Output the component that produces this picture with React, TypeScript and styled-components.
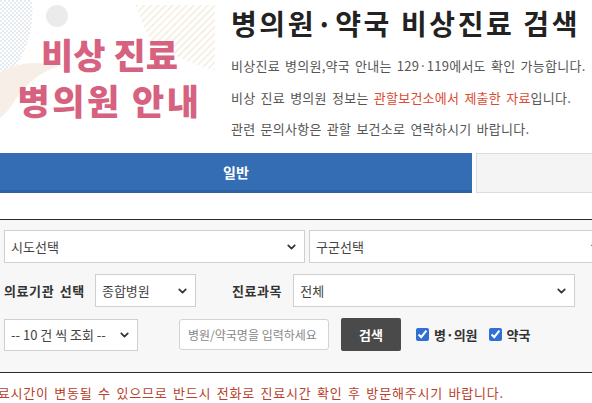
import React from "react"
import styled, { createGlobalStyle } from "styled-components"
import { ChevronDown } from "lucide-react"

const GlobalStyle = createGlobalStyle`
  html, body {
    margin: 0;
    padding: 0;
    background: #fff;
  }
  body {
    font-family: "Noto Sans CJK KR", "Noto Sans", sans-serif;
    color: #333;
  }
`

const Page = styled.div`
  width: 592px;
  height: 403px;
  overflow: hidden;
`

const Header = styled.header`
  display: flex;
  height: 150px;
`

const Banner = styled.div`
  position: relative;
  width: 215px;
  flex: none;
  display: flex;
  flex-direction: column;
  align-items: center;
  justify-content: center;
  padding-top: 4px;
  box-sizing: border-box;
`

const BannerDecor = styled.svg`
  position: absolute;
  inset: 0;
  z-index: 0;
`

const BannerLine = styled.div<{ $ls: number }>`
  position: relative;
  z-index: 1;
  color: #d6627f;
  font-size: 35px;
  font-weight: 900;
  line-height: 46px;
  letter-spacing: ${(p) => p.$ls}px;
  padding-left: 4px;
`

const Intro = styled.div`
  flex: 1;
  padding-left: 16px;
  white-space: nowrap;
`

const Title = styled.h1`
  margin: 8px 0 12px;
  font-size: 28px;
  font-weight: 700;
  line-height: 30px;
  color: #222;
  letter-spacing: 2.6px;
`

const InfoLine = styled.p`
  margin: 0;
  font-size: 13px;
  line-height: 31.5px;
  color: #555;
  letter-spacing: 0.25px;
  word-spacing: 2px;
`

const Red = styled.span`
  color: #dc4a2f;
`

const Tabs = styled.nav`
  display: grid;
  grid-template-columns: 472px 1fr;
  gap: 4px;
  margin-top: 3px;
  height: 40px;
`

const Tab = styled.button<{ $active?: boolean }>`
  border: ${(p) => (p.$active ? "none" : "1px solid #dcdcdc")};
  border-bottom: ${(p) => (p.$active ? "3px solid #2d62a6" : "1px solid #dcdcdc")};
  background: ${(p) => (p.$active ? "#346db3" : "#f4f4f4")};
  color: #fff;
  font-family: inherit;
  font-size: 14px;
  font-weight: 700;
  padding: 0;
  margin-right: ${(p) => (p.$active ? "0" : "-30px")};
`

const Form = styled.form`
  margin-top: 26px;
  border-top: 1px solid #2b2b2b;
  border-bottom: 1px solid #2b2b2b;
  background: #f7f7f7;
  padding: 10px 0 21px 4px;
  display: flex;
  flex-direction: column;
  gap: 11px;
`

const Row = styled.div`
  display: flex;
  align-items: center;
`

const SelectWrap = styled.div<{ $w: number; $ml?: number }>`
  position: relative;
  width: ${(p) => p.$w}px;
  margin-left: ${(p) => p.$ml ?? 0}px;
  flex: none;
`

const Select = styled.select<{ $h?: number }>`
  appearance: none;
  -webkit-appearance: none;
  width: 100%;
  height: ${(p) => p.$h ?? 33}px;
  box-sizing: border-box;
  border: 1px solid #cfcfcf;
  background: #fff;
  font-family: inherit;
  font-size: 13px;
  color: #444;
  padding: 0 20px 0 6px;
  border-radius: 0;
  outline: none;
`

const Chevron = styled(ChevronDown)`
  position: absolute;
  right: 7px;
  top: 50%;
  transform: translateY(-50%);
  pointer-events: none;
  color: #333;
`

const Label = styled.label<{ $ml?: number }>`
  font-size: 13px;
  font-weight: 700;
  color: #333;
  letter-spacing: 0.6px;
  word-spacing: 2px;
  margin-left: ${(p) => p.$ml ?? 0}px;
  margin-right: 8px;
  white-space: nowrap;
`

const TextInput = styled.input`
  width: 150px;
  height: 31px;
  box-sizing: border-box;
  border: 1px solid #d3d3d3;
  border-radius: 3px;
  margin-left: 41px;
  padding: 0 8px;
  font-family: inherit;
  font-size: 12px;
  background: #fff;
  &::placeholder {
    color: #888;
  }
`

const SearchButton = styled.button`
  width: 60px;
  height: 33px;
  margin-left: 12px;
  border: none;
  border-radius: 2px;
  background: #4a4a4a;
  color: #fff;
  font-family: inherit;
  font-size: 13px;
  font-weight: 700;
`

const Check = styled.label<{ $ml: number }>`
  display: flex;
  align-items: center;
  gap: 5px;
  margin-left: ${(p) => p.$ml}px;
  font-size: 13px;
  font-weight: 700;
  color: #333;
  input {
    margin: 0;
    width: 13px;
    height: 13px;
    accent-color: #2f6fd6;
  }
`

const Notice = styled.p`
  margin: 10px 0 0;
  font-size: 13px;
  color: #b8412c;
  white-space: nowrap;
  text-indent: -15px;
  letter-spacing: 0.8px;
  word-spacing: 1.8px;
`

const Drop: React.FC<{ w: number; ml?: number; h?: number; value: string }> = ({
  w,
  ml,
  h,
  value,
}) => (
  <SelectWrap $w={w} $ml={ml}>
    <Select $h={h} defaultValue={value}>
      <option>{value}</option>
    </Select>
    <Chevron size={13} strokeWidth={3.2} />
  </SelectWrap>
)

export default function App() {
  return (
    <Page>
      <GlobalStyle />
      <Header>
        <Banner>
          <BannerDecor width="215" height="150" viewBox="0 0 215 150">
            <defs>
              <pattern id="chk" width="4" height="4" patternUnits="userSpaceOnUse">
                <rect width="2" height="2" fill="#d6dde6" />
                <rect x="2" y="2" width="2" height="2" fill="#d6dde6" />
              </pattern>
              <pattern id="stripe" width="5" height="5" patternUnits="userSpaceOnUse" patternTransform="rotate(45)">
                <rect width="1.5" height="5" fill="#f1e8d4" />
              </pattern>
            </defs>
            <path d="M0 0 H32 Q36 40 10 75 L0 80 Z" fill="url(#chk)" opacity="0.6" />
            <circle cx="57" cy="16" r="11" fill="#ebebeb" />
            <path d="M135 5 H215 V70 Q180 62 150 40 Z" fill="url(#stripe)" opacity="0.8" />
            <path d="M0 72 Q25 58 60 66 Q35 72 15 100 Q8 112 0 118 Z" fill="#f8eee8" />
          </BannerDecor>
          <BannerLine $ls={0}>비상 진료</BannerLine>
          <BannerLine $ls={2.5}>병의원 안내</BannerLine>
        </Banner>
        <Intro>
          <Title>병의원·약국 비상진료 검색</Title>
          <InfoLine>비상진료 병의원,약국 안내는 129·119에서도 확인 가능합니다.</InfoLine>
          <InfoLine>
            비상 진료 병의원 정보는 <Red>관할보건소에서 제출한 자료</Red>입니다.
          </InfoLine>
          <InfoLine>관련 문의사항은 관할 보건소로 연락하시기 바랍니다.</InfoLine>
        </Intro>
      </Header>

      <Tabs>
        <Tab $active type="button">일반</Tab>
        <Tab type="button" />
      </Tabs>

      <Form onSubmit={(e) => e.preventDefault()}>
        <Row>
          <Drop w={301} value="시도선택" />
          <Drop w={300} ml={4} value="구군선택" />
        </Row>
        <Row>
          <Label>의료기관 선택</Label>
          <Drop w={101} ml={2} value="종합병원" />
          <Label $ml={36}>진료과목</Label>
          <Drop w={282} ml={3} value="전체" />
        </Row>
        <Row>
          <Drop w={134} h={32} value="-- 10 건 씩 조회 --" />
          <TextInput placeholder="병원/약국명을 입력하세요" />
          <SearchButton type="submit">검색</SearchButton>
          <Check $ml={15}>
            <input type="checkbox" defaultChecked />
            병·의원
          </Check>
          <Check $ml={11}>
            <input type="checkbox" defaultChecked />
            약국
          </Check>
        </Row>
      </Form>

      <Notice>진료시간이 변동될 수 있으므로 반드시 전화로 진료시간 확인 후 방문해주시기 바랍니다.</Notice>
    </Page>
  )
}
